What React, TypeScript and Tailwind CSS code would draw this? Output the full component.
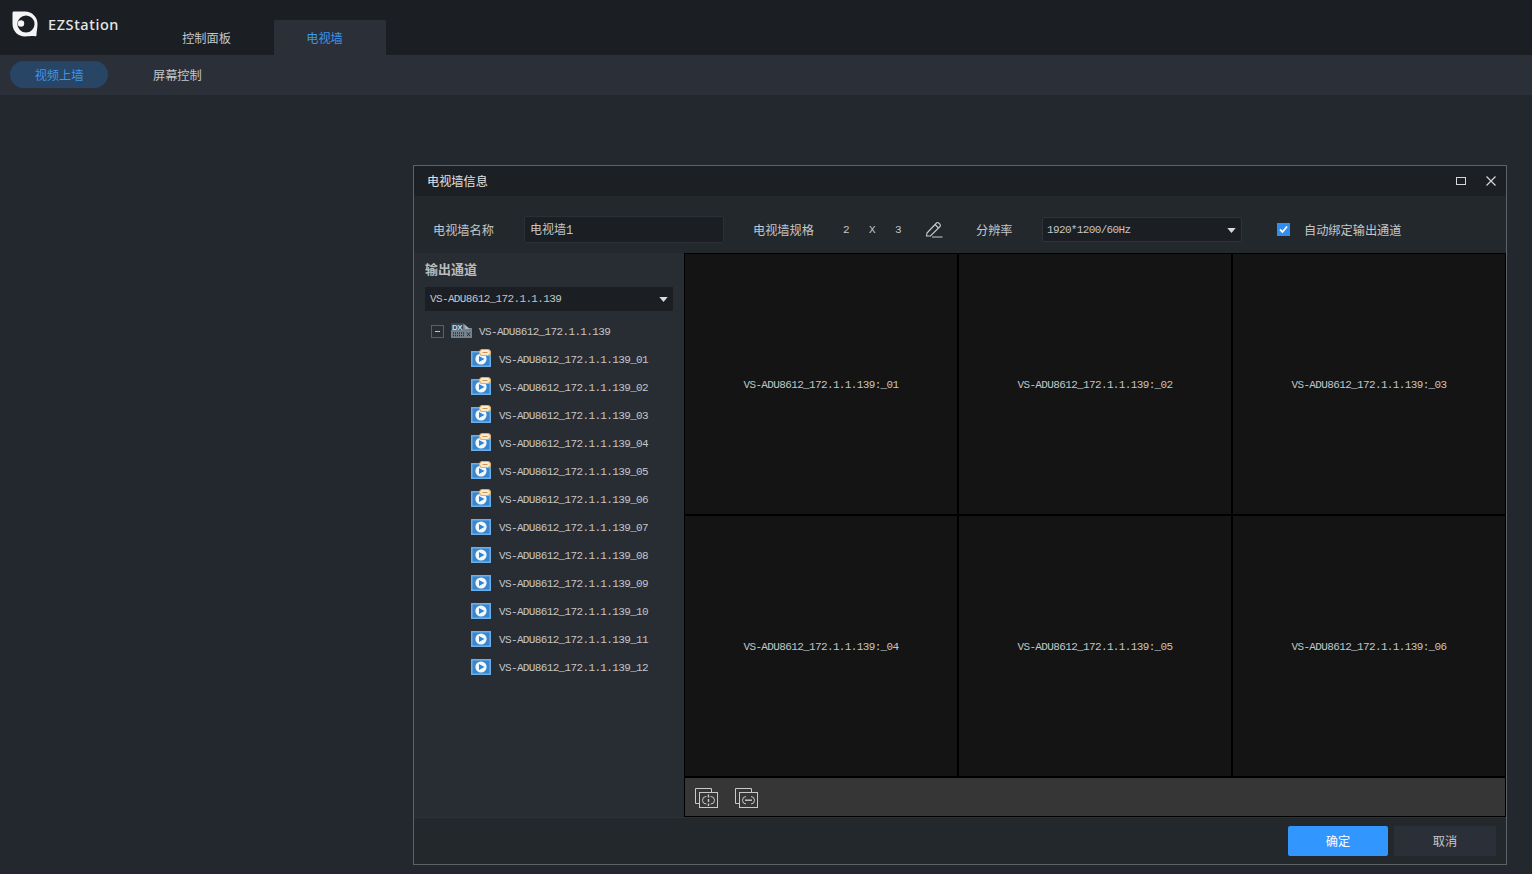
const cjk = { fontFamily: '"Noto Sans CJK SC", sans-serif' };

const monoFont = 'font-["Liberation_Mono","Noto_Sans_CJK_SC",monospace] text-[11px] tracking-[-0.64px]';
const channels = ['01', '02', '03', '04', '05', '06', '07', '08', '09', '10', '11', '12'];
const cells = ['01', '02', '03', '04', '05', '06'];

function Logo() {
  return (
    <svg width="28" height="28" viewBox="0 0 28 28" className="shrink-0">
      <path d="M3 1.5 H14 C21 1.5 26.5 7 26.5 14 C26.5 18 25.5 21.5 25.5 25 C25.5 26 25 26.5 24 26.3 C21 25.8 18 26.5 14 26.5 C7 26.5 1.5 21 1.5 14 V3 C1.5 2 2 1.5 3 1.5 Z" fill="#f4f4f4" />
      <circle cx="15" cy="14" r="8.6" fill="#1b1e23" />
      <circle cx="10" cy="13.5" r="3.2" fill="#f4f4f4" />
    </svg>
  );
}

function Caret() {
  return (
    <svg width="9" height="5" viewBox="0 0 10 6" className="shrink-0">
      <path d="M0 0 H10 L5 6 Z" fill="#d8dadc" />
    </svg>
  );
}

function DeviceIcon() {
  return (
    <svg width="21" height="16" viewBox="0 0 21 16" className="shrink-0">
      <path d="M0 0 H12 L15 5 H21 V15 H0 Z" fill="#74818d" />
      <path d="M13 1 L19 6 H14 Z" fill="#aab4bc" />
      <rect x="0" y="0" width="12" height="7" fill="#3a4550" />
      <text x="1" y="6.5" fontSize="8" fontWeight="700" fill="#d5dadd" fontFamily="Liberation Sans, sans-serif">DX</text>
      <path d="M2 10 H14 M2 12.5 H14" stroke="#2a3138" strokeWidth="1.4" strokeDasharray="1 1" />
      <path d="M16 9.5 L19 13 M19 9.5 L16 13" stroke="#2a3138" strokeWidth="1" />
    </svg>
  );
}

function ChannelIcon({ linked }: { linked: boolean }) {
  return (
    <svg width="22" height="22" viewBox="0 0 22 22" className="shrink-0">
      <rect x="1" y="3" width="20" height="16" fill="#6bb0ee" />
      <rect x="2.5" y="4.5" width="17" height="13" fill="#3a85cc" />
      <circle cx="11" cy="11" r="5.6" fill="#f3f8fc" />
      <path d="M9 8 L14.5 11 L9 14 Z" fill="#2f86d8" />
      {linked && (
        <g>
          <rect x="9.5" y="1.5" width="11" height="6" rx="3" fill="#f6ecd6" stroke="#e6ab5c" strokeWidth="1.2" />
          <path d="M12.5 4.5 H17.5" stroke="#d2954a" strokeWidth="1" />
        </g>
      )}
    </svg>
  );
}

function SplitIcon({ joined }: { joined: boolean }) {
  return (
    <svg width="24" height="22" viewBox="0 0 24 22" fill="none" stroke="#c9c9c9" strokeWidth="1">
      <path d="M5.5 16.5 H1.5 V1.5 H17.5 V5.5" />
      <rect x="5.5" y="5.5" width="18" height="15" />
      <rect x="8.5" y="9.5" width="12" height="7.5" rx="3.7" />
      {joined ? (
        <g>
          <rect x="12" y="9" width="5" height="9" fill="#363636" stroke="none" />
          <path d="M11 13.2 H18" strokeWidth="1.4" />
        </g>
      ) : (
        <g>
          <rect x="12.5" y="9" width="4" height="9" fill="#363636" stroke="none" />
          <path d="M14.5 7.5 V19" strokeWidth="1.4" strokeDasharray="3 1.5" />
        </g>
      )}
    </svg>
  );
}

export default function App() {
  return (
    <div className="relative h-screen w-full overflow-hidden bg-[#23282e] text-[12.2px] text-[#c4c6c8]" style={cjk}>
      {/* Top bar */}
      <div className="flex h-[55px] items-end bg-[#1b1e23]">
        <div className="flex h-full w-[156px] items-start pl-[11px] pt-[10px]">
          <Logo />
          <span className="ml-[9px] mt-[4px] font-['Noto_Sans'] text-[14.5px] font-medium tracking-[0.6px] text-[#e6e7e8]">EZStation</span>
        </div>
        <div className="flex h-[35px] w-[118px] items-center justify-center pr-[17px] pt-[2px]">控制面板</div>
        <div className="flex h-[35px] w-[112px] items-center justify-center rounded-t-[2px] bg-[#2b3038] pr-[11px] pt-[2px] text-[#3f95ea]">电视墙</div>
      </div>

      {/* Sub nav */}
      <div className="flex h-[40px] items-start bg-[#2b3038] pl-[10px] pt-[6px]">
        <div className="flex h-[27px] w-[98px] items-center justify-center rounded-full bg-[#284565] pt-[2px] text-[#3f95ea]">视频上墙</div>
        <div className="ml-[45px] flex h-[27px] items-center pt-[2px]">屏幕控制</div>
      </div>

      {/* Dialog */}
      <div className="absolute left-[413px] top-[165px] flex h-[700px] w-[1094px] flex-col border border-[#5d6267] bg-[#23282d]">
        <div className="flex h-[30px] shrink-0 items-center justify-between bg-[#1c2024] pl-[13px] pr-[9px] text-[#e2e3e4]">
          <span>电视墙信息</span>
          <div className="flex items-center gap-[19px]">
            <div className="h-[8px] w-[10px] border border-[#d5d6d7]" />
            <svg width="12" height="12" viewBox="0 0 12 12" stroke="#d5d6d7" strokeWidth="1.2">
              <path d="M1.5 1.5 L10.5 10.5 M10.5 1.5 L1.5 10.5" />
            </svg>
          </div>
        </div>

        {/* Toolbar */}
        <div className="flex h-[57px] shrink-0 items-center pl-[19px] pt-[10px]">
          <span className="w-[91px] pt-[2px]">电视墙名称</span>
          <div className={`flex h-[27px] w-[200px] items-center rounded-[2px] border border-[#2b3036] bg-[#1b1e22] pl-[5px] pt-[2px] ${monoFont}`}>
            <span className="text-[12px] tracking-normal">电视墙1</span>
          </div>
          <span className="ml-[29px] w-[61px] pt-[2px]">电视墙规格</span>
          <div className={`ml-[29px] flex w-[58px] justify-between pt-px ${monoFont}`}>
            <span>2</span>
            <span>X</span>
            <span>3</span>
          </div>
          <svg className="ml-[24px]" width="18" height="17" viewBox="0 0 18 17" fill="none" stroke="#c9cacb" strokeWidth="1.1">
            <path d="M2 12 L11.5 2 C12.2 1.3 13 1.3 13.7 2 L15 3.3 C15.7 4 15.7 4.8 15 5.5 L5.5 15 H1.5 Z" />
            <path d="M10 3.5 L13.5 7 M7 16 H17.5" />
          </svg>
          <span className="ml-[33px] w-[36px] shrink-0 whitespace-nowrap pt-[2px]">分辨率</span>
          <div className={`ml-[30px] flex h-[25px] w-[200px] items-center justify-between rounded-[2px] border border-[#2f343a] bg-[#1b1e22] pl-[4px] pr-[5px] pt-px ${monoFont}`}>
            <span>1920*1200/60Hz</span>
            <Caret />
          </div>
          <div className="ml-[35px] flex h-[13px] w-[13px] items-center justify-center bg-[#2f8ff0]">
            <svg width="11" height="11" viewBox="0 0 11 11" fill="none" stroke="#fff" strokeWidth="1.8">
              <path d="M2 5.5 L4.5 8 L9 2.5" />
            </svg>
          </div>
          <span className="ml-[14px] pt-[2px]">自动绑定输出通道</span>
        </div>

        {/* Main area */}
        <div className="flex min-h-0 flex-1">
          <div className="flex w-[270px] shrink-0 flex-col bg-[#282d33] pl-[11px] pr-[11px]">
            <div className="mt-[6px] h-[19px] text-[13px] font-bold leading-[19px] text-[#b9bbbd]">输出通道</div>
            <div className={`mt-[9px] flex h-[24px] items-center justify-between bg-[#1b1e22] pl-[5px] pr-[5px] pt-px ${monoFont}`}>
              <span>VS-ADU8612_172.1.1.139</span>
              <Caret />
            </div>
            <div className={`${monoFont} mt-[6px]`}>
              <div className="flex h-[28px] items-center pl-[6px]">
                <div className="flex h-[13px] w-[13px] items-center justify-center border border-[#5a6068]">
                  <div className="h-px w-[5px] bg-[#c4c6c8]" />
                </div>
                <div className="ml-[7px]"><DeviceIcon /></div>
                <span className="ml-[7px] pt-[2px]">VS-ADU8612_172.1.1.139</span>
              </div>
              {channels.map((ch, i) => (
                <div key={ch} className="flex h-[28px] items-center pl-[45px]">
                  <ChannelIcon linked={i < 6} />
                  <span className="ml-[7px] pt-[2px]">VS-ADU8612_172.1.1.139_{ch}</span>
                </div>
              ))}
            </div>
          </div>

          <div className="flex min-w-0 flex-1 flex-col border-x border-black bg-black">
            <div className={`grid h-[525px] grid-cols-3 grid-rows-[260px_260px] gap-[2px] border-t border-black ${monoFont}`}>
              {cells.map((c) => (
                <div key={c} className="flex items-center justify-center bg-[#141414] pt-[2px]">
                  VS-ADU8612_172.1.1.139:_{c}
                </div>
              ))}
            </div>
            <div className="mb-px flex flex-1 items-center gap-[16px] bg-[#363636] pl-[9px] pt-[2px]">
              <SplitIcon joined={false} />
              <SplitIcon joined />
            </div>
          </div>
        </div>

        {/* Footer */}
        <div className="flex h-[47px] shrink-0 items-center justify-end border-t border-[#2c3137] pr-[10px]">
          <button className="h-[30px] w-[100px] rounded-[2px] bg-[#3197ff] text-[#fff]">确定</button>
          <button className="ml-[6px] h-[30px] w-[102px] rounded-[2px] bg-[#2b3038] text-[#c4c6c8]">取消</button>
        </div>
      </div>
    </div>
  );
}
